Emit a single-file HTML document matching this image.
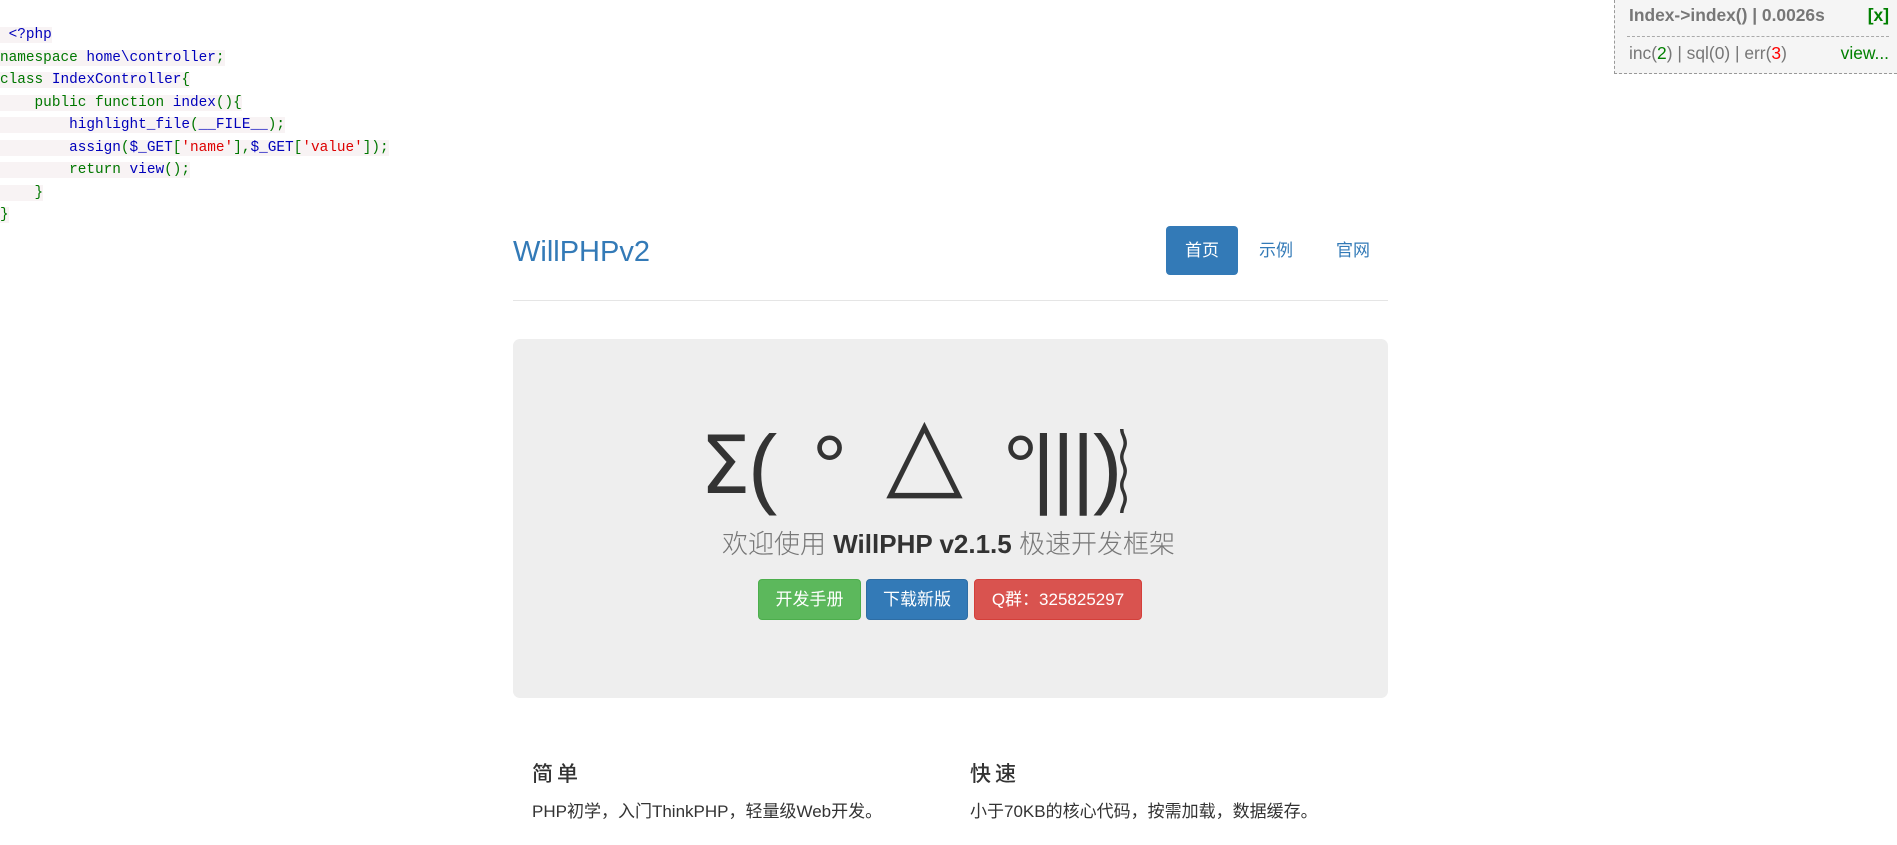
<!DOCTYPE html>
<html><head><meta charset="utf-8">
<style>
*{margin:0;padding:0;box-sizing:border-box}
body{width:1897px;height:845px;overflow:hidden;background:#fff;font-family:"Liberation Sans","Noto Sans CJK SC",sans-serif;position:relative;color:#333}
pre{position:absolute;left:0;top:24px;font-family:"Liberation Mono","DejaVu Sans Mono",monospace;font-size:14.4px;line-height:22.5px}
pre span.l{background:#f8f3f4}
.k{color:#007700}.b{color:#0000bb}.s{color:#dd0000}
.dbg{position:absolute;left:1614px;top:0;width:283px;height:74px;background:#f5f5f5;border-left:1px dashed #999;border-bottom:1px dashed #999;font-size:17.4px;color:#777}
.dbg .r1{position:absolute;left:14px;top:5px;font-weight:bold}
.dbg .x{position:absolute;right:8px;top:5px;color:#008000;font-weight:bold}
.dbg .sep{position:absolute;left:12px;right:8px;top:36px;border-top:1px dashed #aaa}
.dbg .r2{position:absolute;left:14px;top:43px}
.dbg .v{position:absolute;right:8px;top:43px;color:#008000}
.brand{position:absolute;left:513px;top:236px;font-size:29px;color:#337ab7}
.pill{position:absolute;top:226px;height:49px;line-height:49px;font-size:17px;color:#337ab7;text-align:center}
.hr{position:absolute;left:513px;width:875px;top:300px;border-top:1px solid #e5e5e5}
.jum{position:absolute;left:513px;top:339px;width:875px;height:359px;background:#eee;border-radius:7px}
.g{position:absolute;font-size:88px;color:#333;top:417px;line-height:100px;font-family:"Liberation Sans",sans-serif;white-space:nowrap}
.sub{position:absolute;left:0;width:1897px;top:524px;text-align:center;font-size:26px;color:#777;font-weight:300}
.sub b{color:#333;font-weight:700;font-family:"Liberation Sans",sans-serif}
.btn{position:absolute;top:579px;height:41px;line-height:39px;color:#fff;font-size:17px;text-align:center;border-radius:4px;border:1px solid}
h4{position:absolute;top:758px;font-size:21px;font-weight:500;letter-spacing:4px;color:#333}
p{position:absolute;top:797px;font-size:17px;color:#333}
</style></head><body>
<pre><span class="l"> <span class="b">&lt;?php</span></span>
<span class="l"><span class="k">namespace </span><span class="b">home\controller</span><span class="k">;</span></span>
<span class="l"><span class="k">class </span><span class="b">IndexController</span><span class="k">{</span></span>
<span class="l"><span class="k">    public function </span><span class="b">index</span><span class="k">(){</span></span>
<span class="l"><span class="b">        highlight_file</span><span class="k">(</span><span class="b">__FILE__</span><span class="k">);</span></span>
<span class="l"><span class="b">        assign</span><span class="k">(</span><span class="b">$_GET</span><span class="k">[</span><span class="s">'name'</span><span class="k">],</span><span class="b">$_GET</span><span class="k">[</span><span class="s">'value'</span><span class="k">]);</span></span>
<span class="l"><span class="k">        return </span><span class="b">view</span><span class="k">();</span></span>
<span class="l"><span class="k">    }</span></span>
<span class="l"><span class="k">}</span></span></pre>
<div class="dbg"><span class="r1">Index-&gt;index() | 0.0026s</span><span class="x">[x]</span><div class="sep"></div><span class="r2">inc(<span style="color:#008000">2</span>) | sql(0) | err(<span style="color:red">3</span>)</span><span class="v">view...</span></div>
<div class="brand">WillPHPv2</div>
<div class="pill" style="left:1166px;width:72px;background:#337ab7;color:#fff;border-radius:4px">首页</div>
<div class="pill" style="left:1244px;width:64px">示例</div>
<div class="pill" style="left:1321px;width:64px">官网</div>
<div class="hr"></div>
<div class="jum"></div>
<span class="g" style="left:700px;top:416px;font-size:80px;font-family:'DejaVu Sans',sans-serif">Σ</span>
<span class="g" style="left:748px">(</span>
<span class="g" style="left:812px">°</span>
<span class="g" style="left:886px;top:402px;font-size:100px;font-family:'DejaVu Sans',sans-serif">△</span>
<span class="g" style="left:1003px">°</span>
<span class="g" style="left:1032px;letter-spacing:-3px">|||</span>
<span class="g" style="left:1093px">)</span>
<span class="g" style="left:1118px;font-size:60px;top:425px;transform:scaleY(1.4);font-family:'DejaVu Sans','Noto Sans CJK SC',sans-serif">︴</span>
<div class="sub">欢迎使用 <b>WillPHP v2.1.5</b> 极速开发框架</div>
<div class="btn" style="left:758px;width:103px;background:#5cb85c;border-color:#4cae4c">开发手册</div>
<div class="btn" style="left:866px;width:102px;background:#337ab7;border-color:#2e6da4">下载新版</div>
<div class="btn" style="left:974px;width:168px;background:#d9534f;border-color:#d43f3a">Q群：325825297</div>
<h4 style="left:532px">简单</h4>
<p style="left:532px">PHP初学，入门ThinkPHP，轻量级Web开发。</p>
<h4 style="left:970px">快速</h4>
<p style="left:970px">小于70KB的核心代码，按需加载，数据缓存。</p>
</body></html>
